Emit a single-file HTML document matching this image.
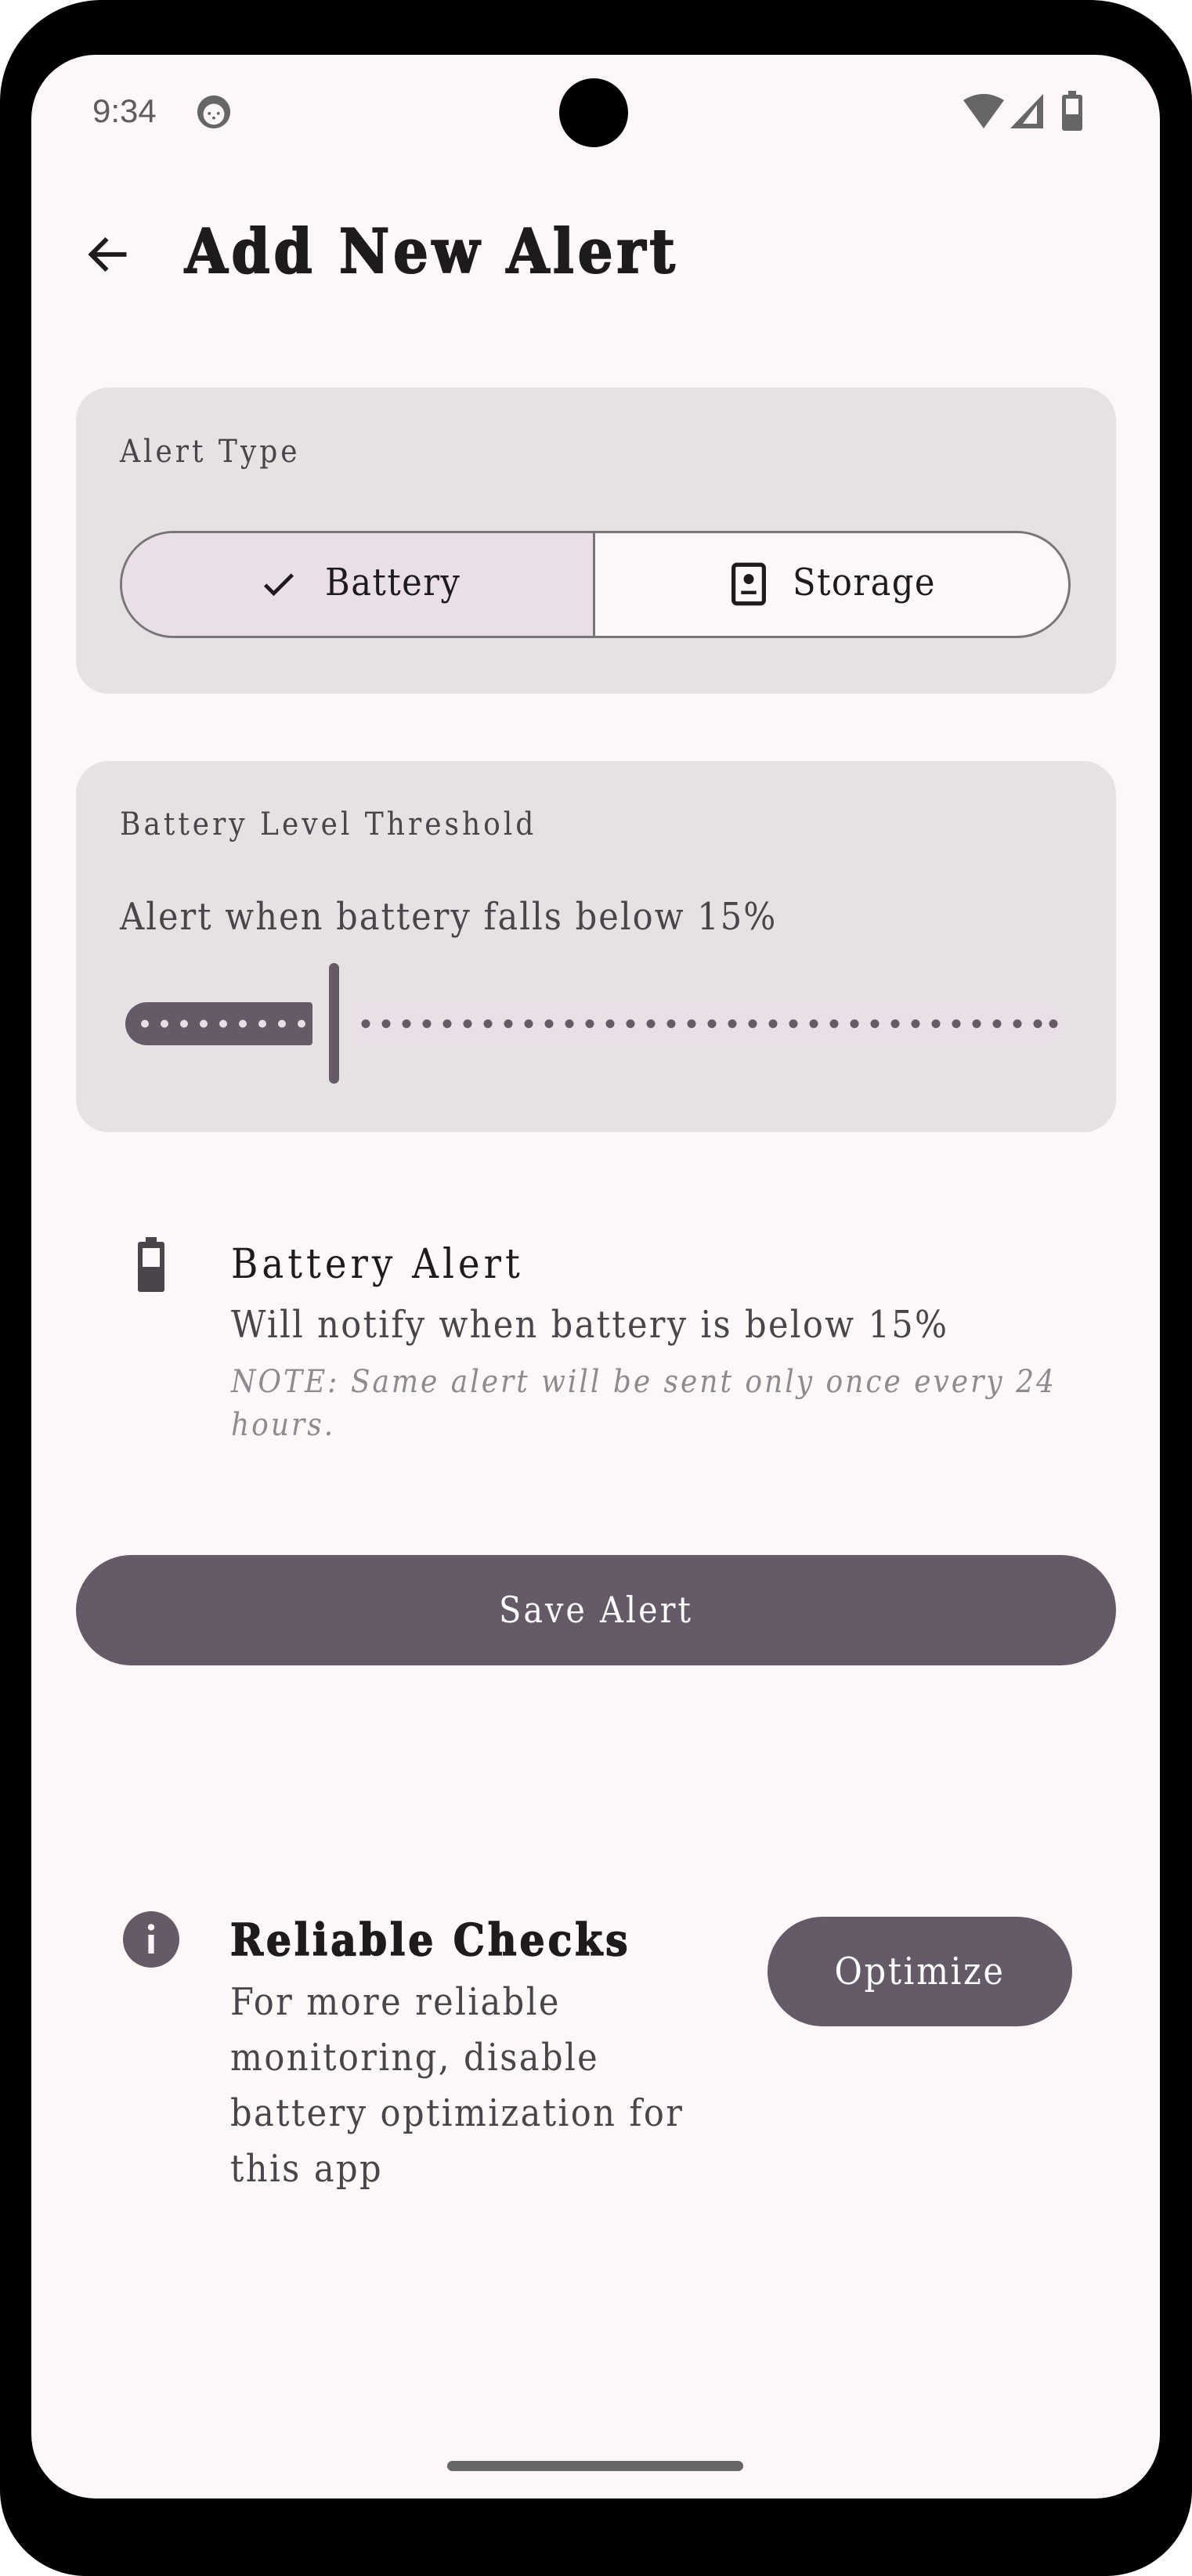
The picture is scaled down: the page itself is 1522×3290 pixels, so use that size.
<!DOCTYPE html>
<html><head><meta charset="utf-8"><style>
*{margin:0;padding:0;box-sizing:border-box}
html,body{width:1522px;height:3290px;background:#fff;overflow:hidden}
.frame{position:absolute;left:0;top:0;width:1522px;height:3290px;background:#000;border-radius:130px 130px 110px 110px}
.screen{position:absolute;left:40px;top:70px;width:1441px;height:3121px;background:#fdf8f7;border-radius:82px}
.t{position:absolute;white-space:nowrap;font-family:"DejaVu Serif Condensed","DejaVu Serif","Liberation Serif",serif;font-stretch:condensed}
.card{position:absolute;left:97px;width:1328px;background:#e6e1e3;border-radius:42px}
</style></head><body>
<div class="frame"></div>
<div class="screen"></div>
<div class="t" style="left:118px;top:118px;font-family:'Liberation Sans',sans-serif;font-size:42px;color:#5f5c5f;font-stretch:normal">9:34</div>
<svg style="position:absolute;left:250px;top:120px" width="46" height="46" viewBox="0 0 24 24"><circle cx="12" cy="12" r="11" fill="#666"/><circle cx="12" cy="13.5" r="7" fill="#fdf8f7"/><circle cx="9" cy="13" r="1" fill="#666"/><circle cx="15" cy="13" r="1" fill="#666"/><circle cx="12" cy="16" r="1" fill="#666"/></svg>
<div style="position:absolute;left:714px;top:100px;width:88px;height:88px;border-radius:50%;background:#000"></div>
<svg style="position:absolute;left:1228px;top:118px" width="56" height="48" viewBox="0 0 28 24"><path d="M1 5 Q14 -3 27 5 L14 23 Z" fill="#666"/></svg>
<svg style="position:absolute;left:1288px;top:118px" width="46" height="48" viewBox="0 0 23 24"><path d="M22 1 L22 23 L1 23 Z" fill="#666"/><path d="M18 8 L18 20 L9 20 Z" fill="#fdf8f7"/></svg>
<svg style="position:absolute;left:1355px;top:116px" width="28" height="52" viewBox="0 0 14 26"><rect x="4.5" y="0" width="5" height="3" fill="#666"/><rect x="0.5" y="2.5" width="13" height="23" rx="1.5" fill="#666"/><rect x="3" y="5" width="8" height="10" fill="#fdf8f7"/></svg>
<svg style="position:absolute;left:106px;top:295px" width="66" height="60" viewBox="0 0 24 24"><path d="M21 12 H4 M11 4 L3 12 L11 20" stroke="#1d1b1d" stroke-width="2.3" fill="none"/></svg>
<div class="t" style="left:236px;top:276px;font-size:78px;font-weight:900;color:#1d1b1d;letter-spacing:5px;-webkit-text-stroke:2px #1d1b1d">Add New Alert</div>
<div class="card" style="top:495px;height:391px"></div>
<div class="t" style="left:153px;top:554px;font-size:40px;color:#49454a;letter-spacing:4px">Alert Type</div>
<div style="position:absolute;left:153px;top:678px;width:1214px;height:137px;border:3px solid #7a7579;border-radius:69px;overflow:hidden;background:#fdf8f7">
<div style="position:absolute;left:0;top:0;width:604px;height:131px;background:#ebdfe7;border-right:3px solid #7a7579"></div></div>
<svg style="position:absolute;left:330px;top:720px" width="52" height="52" viewBox="0 0 24 24"><path d="M4 12.5 L9 17.5 L20 6.5" stroke="#1d1b1d" stroke-width="2.2" fill="none"/></svg>
<div class="t" style="left:415px;top:716px;font-size:48px;color:#1d1b1d;letter-spacing:1.5px">Battery</div>
<svg style="position:absolute;left:930px;top:718px" width="52" height="56" viewBox="0 0 24 26"><rect x="3" y="1.5" width="18" height="23" rx="2" stroke="#1d1b1d" stroke-width="2.4" fill="none"/><circle cx="12" cy="10" r="3" fill="#1d1b1d"/><rect x="7.5" y="17" width="9" height="2" fill="#1d1b1d"/></svg>
<div class="t" style="left:1012px;top:716px;font-size:48px;color:#1d1b1d;letter-spacing:1.5px">Storage</div>
<div class="card" style="top:972px;height:474px"></div>
<div class="t" style="left:153px;top:1030px;font-size:40px;color:#49454a;letter-spacing:4px">Battery Level Threshold</div>
<div class="t" style="left:153px;top:1143px;font-size:48px;color:#49454a;letter-spacing:2px">Alert when battery falls below 15%</div>
<div style="position:absolute;left:160px;top:1280px;width:239px;height:55px;background:#655a66;border-radius:28px 4px 4px 28px"></div>
<div style="position:absolute;left:452px;top:1280px;width:907px;height:55px;background:#ebdfe7;border-radius:4px 28px 28px 4px"></div>
<svg style="position:absolute;left:160px;top:1280px" width="1200" height="55">
<g fill="#ebdfe7"><circle cx="25" cy="27.5" r="5"/><circle cx="50" cy="27.5" r="5"/><circle cx="75" cy="27.5" r="5"/><circle cx="100" cy="27.5" r="5"/><circle cx="125" cy="27.5" r="5"/><circle cx="150" cy="27.5" r="5"/><circle cx="175" cy="27.5" r="5"/><circle cx="200" cy="27.5" r="5"/><circle cx="225" cy="27.5" r="5"/></g>
</svg>
<svg style="position:absolute;left:452px;top:1280px" width="907" height="55"><g fill="#655a66">
<circle cx="15" cy="27.5" r="5.5"/><circle cx="41" cy="27.5" r="5.5"/><circle cx="67" cy="27.5" r="5.5"/><circle cx="93" cy="27.5" r="5.5"/><circle cx="119" cy="27.5" r="5.5"/><circle cx="145" cy="27.5" r="5.5"/><circle cx="171" cy="27.5" r="5.5"/><circle cx="197" cy="27.5" r="5.5"/><circle cx="223" cy="27.5" r="5.5"/><circle cx="249" cy="27.5" r="5.5"/><circle cx="275" cy="27.5" r="5.5"/><circle cx="301" cy="27.5" r="5.5"/><circle cx="327" cy="27.5" r="5.5"/><circle cx="353" cy="27.5" r="5.5"/><circle cx="379" cy="27.5" r="5.5"/><circle cx="405" cy="27.5" r="5.5"/><circle cx="431" cy="27.5" r="5.5"/><circle cx="457" cy="27.5" r="5.5"/><circle cx="483" cy="27.5" r="5.5"/><circle cx="509" cy="27.5" r="5.5"/><circle cx="535" cy="27.5" r="5.5"/><circle cx="561" cy="27.5" r="5.5"/><circle cx="587" cy="27.5" r="5.5"/><circle cx="613" cy="27.5" r="5.5"/><circle cx="639" cy="27.5" r="5.5"/><circle cx="665" cy="27.5" r="5.5"/><circle cx="691" cy="27.5" r="5.5"/><circle cx="717" cy="27.5" r="5.5"/><circle cx="743" cy="27.5" r="5.5"/><circle cx="769" cy="27.5" r="5.5"/><circle cx="795" cy="27.5" r="5.5"/><circle cx="821" cy="27.5" r="5.5"/><circle cx="847" cy="27.5" r="5.5"/><circle cx="873" cy="27.5" r="5.5"/><circle cx="893" cy="27.5" r="5.5"/>
</g></svg>
<div style="position:absolute;left:420px;top:1230px;width:13px;height:154px;background:#655a66;border-radius:7px"></div>
<svg style="position:absolute;left:174px;top:1580px" width="38" height="72" viewBox="0 0 19 36"><rect x="6" y="0" width="7" height="4" fill="#49454a"/><rect x="1" y="3" width="17" height="32" rx="1.5" fill="#49454a"/><rect x="4" y="7" width="11" height="12" fill="#fdf8f7"/></svg>
<div class="t" style="left:295px;top:1585px;font-size:52px;color:#1d1b1d;letter-spacing:5px">Battery Alert</div>
<div class="t" style="left:295px;top:1664px;font-size:48px;color:#49454a;letter-spacing:2.3px">Will notify when battery is below 15%</div>
<div class="t" style="left:295px;top:1738px;font-size:40px;line-height:55px;color:#8f8a8f;font-style:italic;letter-spacing:3px">NOTE: Same alert will be sent only once every 24<br>hours.</div>
<div style="position:absolute;left:97px;top:1986px;width:1328px;height:141px;background:#655a68;border-radius:71px"></div>
<div class="t" style="left:97px;width:1328px;top:2029px;text-align:center;font-size:46px;color:#fff;letter-spacing:3px">Save Alert</div>
<svg style="position:absolute;left:157px;top:2441px" width="72" height="72" viewBox="0 0 24 24"><circle cx="12" cy="12" r="12" fill="#655a66"/><rect x="10.8" y="10" width="2.4" height="8" fill="#fdf8f7"/><circle cx="12" cy="6.8" r="1.4" fill="#fdf8f7"/></svg>
<div class="t" style="left:294px;top:2445px;font-size:56px;font-weight:900;color:#1d1b1d;letter-spacing:4px;-webkit-text-stroke:1.5px #1d1b1d">Reliable Checks</div>
<div class="t" style="left:294px;top:2522px;font-size:48px;line-height:71px;color:#49454a;letter-spacing:2.4px">For more reliable<br>monitoring, disable<br>battery optimization for<br>this app</div>
<div style="position:absolute;left:980px;top:2448px;width:389px;height:140px;background:#655a68;border-radius:70px"></div>
<div class="t" style="left:980px;width:389px;top:2490px;text-align:center;font-size:48px;color:#fff;letter-spacing:2.6px">Optimize</div>
<div style="position:absolute;left:571px;top:3143px;width:378px;height:13px;background:#666;border-radius:7px"></div>
</body></html>
